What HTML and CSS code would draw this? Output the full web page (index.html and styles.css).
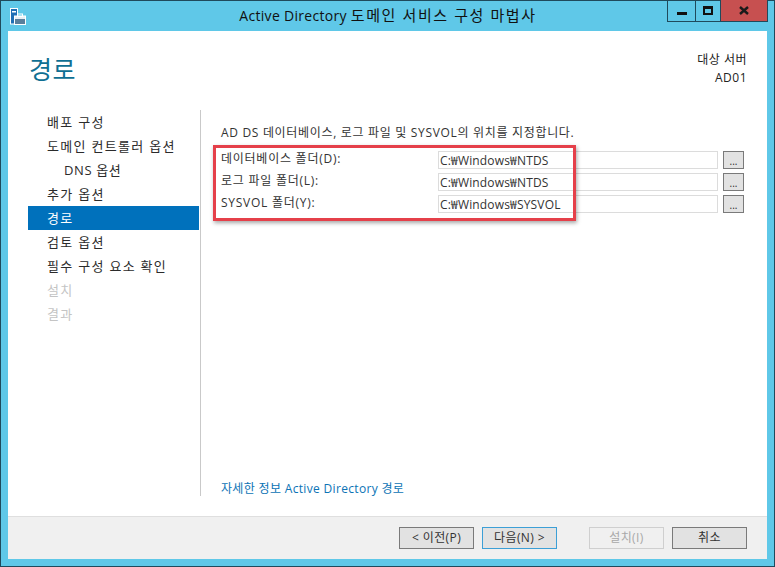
FILE: index.html
```html
<!DOCTYPE html>
<html lang="ko">
<head>
<meta charset="utf-8">
<title>Active Directory 도메인 서비스 구성 마법사</title>
<link rel="stylesheet" href="styles.css">
</head>
<body>
<div class="window">
  <div class="titlebar">
    <svg class="app-icon" width="16" height="17" viewBox="0 0 16 17">
      <rect x="0.5" y="0.5" width="7" height="15.5" fill="#1f6fb5" stroke="#fff"/>
      <rect x="2" y="3" width="4" height="1.5" fill="#fff"/>
      <rect x="4.5" y="8" width="11" height="8.5" fill="#e8eef2" stroke="#fff"/>
      <rect x="5" y="11" width="10" height="5" fill="#5a7f9c"/>
      <rect x="7.5" y="6" width="5" height="2.5" fill="none" stroke="#fff"/>
    </svg>
    <div class="title">Active Directory <span class="title-ko">도메인 서비스 구성 마법사</span></div>
    <div class="controls">
      <div class="ctl ctl-min"><span class="min-glyph"></span></div>
      <div class="ctl ctl-max"><span class="max-glyph"></span></div>
      <div class="ctl ctl-close">
        <svg width="10" height="9" viewBox="0 0 10 9"><path d="M1 1 L9 8 M9 1 L1 8" stroke="#1a1a1a" stroke-width="2.4" fill="none"/></svg>
      </div>
    </div>
  </div>
  <div class="client">
    <header class="head">
      <h1 class="page-title">경로</h1>
      <div class="target"><div>대상 서버</div><div>AD01</div></div>
    </header>
    <div class="main">
      <nav class="nav">
        <div class="nav-item">배포 구성</div>
        <div class="nav-item">도메인 컨트롤러 옵션</div>
        <div class="nav-item sub">DNS 옵션</div>
        <div class="nav-item">추가 옵션</div>
        <div class="nav-item active">경로</div>
        <div class="nav-item">검토 옵션</div>
        <div class="nav-item">필수 구성 요소 확인</div>
        <div class="nav-item off">설치</div>
        <div class="nav-item off">결과</div>
      </nav>
      <section class="pane">
        <p class="intro">AD DS 데이터베이스, 로그 파일 및 SYSVOL의 위치를 지정합니다.</p>
        <div class="form">
          <div class="row"><label class="lbl">데이터베이스 폴더(D):</label><div class="input">C:₩Windows₩NTDS</div><div class="browse">...</div></div>
          <div class="row"><label class="lbl">로그 파일 폴더(L):</label><div class="input">C:₩Windows₩NTDS</div><div class="browse">...</div></div>
          <div class="row"><label class="lbl">SYSVOL 폴더(Y):</label><div class="input">C:₩Windows₩SYSVOL</div><div class="browse">...</div></div>
          <div class="callout"></div>
        </div>
        <a class="more">자세한 정보 Active Directory 경로</a>
      </section>
    </div>
    <footer class="foot">
      <div class="btn">&lt; 이전(P)</div>
      <div class="btn btn-default">다음(N) &gt;</div>
      <div class="btn btn-off btn-install">설치(I)</div>
      <div class="btn">취소</div>
    </footer>
  </div>
</div>
</body>
</html>
```

FILE: styles.css
```css
* { box-sizing: border-box; }
html, body { margin: 0; padding: 0; }
body {
  width: 775px;
  height: 567px;
  overflow: hidden;
  font-family: "Open Sans", "Noto Sans CJK KR", sans-serif;
  font-size: 12px;
  color: #2b2b2b;
}
.window {
  width: 775px;
  height: 567px;
  display: flex;
  flex-direction: column;
  background: #5fc8e8;
  border: 1px solid #1f4a5c;
  padding: 0 7px 7px;
}
.titlebar {
  height: 30px;
  flex: none;
  display: flex;
  position: relative;
  justify-content: center;
}
.app-icon { position: absolute; left: 2px; top: 7px; }
.title {
  font-size: 14px;
  line-height: 29px;
  color: #111;
  margin-left: 1px;
  letter-spacing: 0.3px;
  white-space: nowrap;
}
.title-ko { font-size: 15px; letter-spacing: 1.6px; }
.controls {
  position: absolute;
  right: -1px;
  top: -1px;
  height: 22px;
  display: flex;
  border: 1px solid #1f4a5c;
  border-top: 0;
}
.ctl { height: 21px; display: flex; align-items: center; justify-content: center; }
.ctl-min { width: 28px; border-right: 1px solid #1f4a5c; }
.ctl-max { width: 25px; border-right: 1px solid #1f4a5c; }
.ctl-close { width: 46px; background: #c75050; }
.min-glyph { width: 10px; height: 3px; background: #111; margin-top: 5px; }
.max-glyph { width: 10px; height: 9px; border: 2px solid #111; border-top-width: 3px; }
.client {
  flex: 1;
  min-height: 0;
  display: flex;
  flex-direction: column;
  background: #fff;
}
.head {
  height: 79px;
  flex: none;
  display: flex;
  justify-content: space-between;
  padding: 0 20px 0 21px;
}
.page-title {
  margin: 18px 0 0;
  font-size: 25px;
  font-weight: 400;
  line-height: 40px;
  color: #0f6f93;
  letter-spacing: 0.5px;
}
.target {
  margin-top: 20px;
  text-align: right;
  font-size: 12px;
  line-height: 18px;
  color: #222;
  letter-spacing: 0.5px;
}
.main { flex: 1; min-height: 0; display: flex; height: 386px; }
.nav {
  width: 192px;
  flex: none;
  padding-left: 20px;
  position: relative;
}
.nav-item {
  width: 171px;
  height: 24px;
  line-height: 24px;
  padding-left: 19px;
  font-size: 13px;
  letter-spacing: 1.3px;
  color: #2b2b2b;
}
.nav-item.sub { padding-left: 36px; letter-spacing: 0.6px; }
.nav-item.active { background: #0071bc; color: #fff; }
.nav-item.off { color: #c4c4c4; }
.pane {
  flex: 1;
  min-width: 0;
  display: flex;
  flex-direction: column;
  border-left: 1px solid #c9c9c9;
  padding-left: 20px;
  margin-bottom: 20px;
}
.intro {
  margin: 15px 0 0;
  line-height: 16px;
  font-size: 12px;
  color: #333;
  letter-spacing: 0.68px;
}
.form { position: relative; margin-top: 8px; }
.row { height: 22px; display: flex; align-items: center; }
.lbl { width: 217px; flex: none; font-size: 12px; color: #333; margin-top: -4px; letter-spacing: 0.75px; }
.input {
  width: 280px;
  height: 18px;
  line-height: 17px;
  flex: none;
  padding-left: 1px;
  border: 1px solid #dcdcdc;
  font-size: 12px;
  color: #333;
  background: #fff;
  letter-spacing: 0.17px;
}
.browse {
  width: 21px;
  height: 18px;
  margin-left: 5px;
  flex: none;
  text-align: center;
  line-height: 18px;
  border: 1px solid #7a7a7a;
  background: #e2e2e2;
  font-size: 10px;
}
.callout {
  position: absolute;
  left: -8px;
  top: -4px;
  width: 363px;
  height: 76px;
  border: 3px solid #e5404a;
  box-shadow: 1px 2px 4px rgba(0, 0, 0, 0.35);
}
.more {
  margin-top: auto;
  margin-bottom: -1px;
  line-height: 16px;
  font-size: 12px;
  color: #0b73b5;
  letter-spacing: 0.33px;
}
.foot {
  height: 43px;
  flex: none;
  display: flex;
  align-items: center;
  justify-content: flex-end;
  padding: 0 20px 1px 0;
  background: #f0f0f0;
  border-top: 1px solid #dfdfdf;
}
.btn {
  width: 75px;
  height: 22px;
  margin-left: 8px;
  text-align: center;
  line-height: 20px;
  border: 1px solid #7a7a7a;
  background: #e2e2e2;
  font-size: 12px;
  color: #333;
  letter-spacing: 0.4px;
}
.btn-default { border-color: #3c9fd6; }
.btn-off { background: #f0f0f0; border-color: #cfcfcf; color: #a8a8a8; }
.btn-install { margin-left: 32px; }
```
